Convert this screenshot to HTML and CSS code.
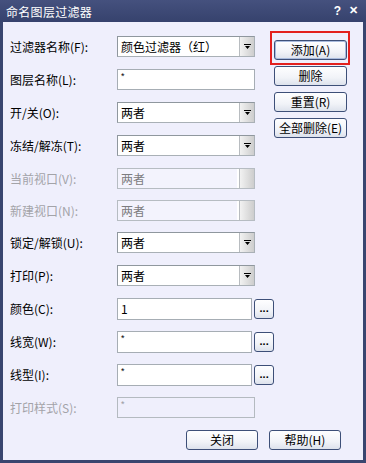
FILE: index.html
```html
<html>
  <head>
    <meta charset="utf-8">
    <link rel="stylesheet" href="styles.css">
  </head>
  <body>
    <div class="dialog">
      <div class="titlebar">
        <span class="title">命名图层过滤器</span>
        <span class="caption-btns"><span class="help">?</span><span class="close">✕</span></span>
      </div>

      <div class="content">
        <div class="form">
          <div class="row">
            <span class="label">过滤器名称(F):</span>
            <div class="combo"><span class="val">颜色过滤器（红）</span><span class="drop"><svg width="7" height="5" viewBox="0 0 7 5"><path d="M0 0h7v1H0zM1 2h5L3.5 5z" fill="#000"/></svg></span></div>
          </div>
          <div class="row">
            <span class="label">图层名称(L):</span>
            <div class="text wide"><span class="star">*</span></div>
          </div>
          <div class="row">
            <span class="label">开/关(O):</span>
            <div class="combo"><span class="val">两者</span><span class="drop"><svg width="7" height="5" viewBox="0 0 7 5"><path d="M0 0h7v1H0zM1 2h5L3.5 5z" fill="#000"/></svg></span></div>
          </div>
          <div class="row">
            <span class="label">冻结/解冻(T):</span>
            <div class="combo"><span class="val">两者</span><span class="drop"><svg width="7" height="5" viewBox="0 0 7 5"><path d="M0 0h7v1H0zM1 2h5L3.5 5z" fill="#000"/></svg></span></div>
          </div>
          <div class="row disabled">
            <span class="label">当前视口(V):</span>
            <div class="combo"><span class="val">两者</span><span class="drop"></span></div>
          </div>
          <div class="row disabled short">
            <span class="label">新建视口(N):</span>
            <div class="combo"><span class="val">两者</span><span class="drop"></span></div>
          </div>
          <div class="row">
            <span class="label">锁定/解锁(U):</span>
            <div class="combo"><span class="val">两者</span><span class="drop"><svg width="7" height="5" viewBox="0 0 7 5"><path d="M0 0h7v1H0zM1 2h5L3.5 5z" fill="#000"/></svg></span></div>
          </div>
          <div class="row">
            <span class="label">打印(P):</span>
            <div class="combo"><span class="val">两者</span><span class="drop"><svg width="7" height="5" viewBox="0 0 7 5"><path d="M0 0h7v1H0zM1 2h5L3.5 5z" fill="#000"/></svg></span></div>
          </div>
          <div class="row">
            <span class="label">颜色(C):</span>
            <div class="text"><span class="num">1</span></div>
            <div class="btn dots">...</div>
          </div>
          <div class="row">
            <span class="label">线宽(W):</span>
            <div class="text"><span class="star">*</span></div>
            <div class="btn dots">...</div>
          </div>
          <div class="row">
            <span class="label">线型(I):</span>
            <div class="text"><span class="star">*</span></div>
            <div class="btn dots">...</div>
          </div>
          <div class="row disabled">
            <span class="label">打印样式(S):</span>
            <div class="text wide"><span class="star">*</span></div>
          </div>
        </div>

        <div class="side">
          <div class="btn side-btn focus">添加(A)</div>
          <div class="btn side-btn">删除</div>
          <div class="btn side-btn">重置(R)</div>
          <div class="btn side-btn">全部删除(E)</div>
        </div>
      </div>

      <div class="footer">
        <div class="btn foot-btn">关闭</div>
        <div class="btn foot-btn">帮助(H)</div>
      </div>
    </div>
  </body>
</html>
```

FILE: styles.css
```css
body {
  margin: 0;
  font-family: "Noto Sans CJK SC", "Liberation Sans", sans-serif;
  font-size: 12px;
  color: #000;
}

.dialog {
  width: 366px;
  height: 463px;
  box-sizing: border-box;
  background: #efeffc;
  border: 3px solid #39456f;
  border-top: none;
  display: flex;
  flex-direction: column;
}

.titlebar {
  height: 22px;
  margin: 0 -3px;
  padding: 0 8px 0 6px;
  background: linear-gradient(#45517e, #36426d);
  color: #fff;
  display: flex;
  align-items: center;
  justify-content: space-between;
}

.title {
  font-size: 12px;
  letter-spacing: 0.3px;
}

.caption-btns {
  display: flex;
  gap: 8px;
  font-family: "Liberation Sans", sans-serif;
  font-weight: bold;
  font-size: 12px;
}

.close {
  font-size: 11px;
}

.content {
  display: flex;
  padding-top: 8px;
}

.form {
  width: 264px;
  padding-left: 7px;
}

.row {
  height: 33px;
  display: flex;
  align-items: center;
}

.row.short {
  height: 31px;
}

.label {
  width: 107px;
  flex: none;
  white-space: nowrap;
}

.row.disabled .label {
  color: #a3a3a8;
}

.combo {
  width: 138px;
  height: 21px;
  box-sizing: border-box;
  border: 1px solid #a9b0b6;
  border-top-color: #8f979e;
  border-left-color: #8f979e;
  background: #fff;
  display: flex;
}

.combo .val {
  flex: 1;
  padding-left: 3px;
  line-height: 19px;
  white-space: nowrap;
  overflow: hidden;
}

.combo .drop {
  width: 14px;
  border-left: 1px solid #b8bcc0;
  background: linear-gradient(90deg, #f2f2f2, #cdcdcd);
  display: flex;
  align-items: center;
  justify-content: center;
}

.row.disabled .combo {
  background: #f3f3fd;
  border-color: #b6bcc2;
}

.row.disabled .combo .val {
  color: #7c7c80;
  border-right: 2px solid #fff;
}

.text {
  width: 137px;
  height: 22px;
  box-sizing: border-box;
  border: 1px solid #a6adb4;
  background: #fff;
  padding-left: 3px;
}

.text.wide {
  width: 138px;
  height: 21px;
}

.row.disabled .text {
  background: #efeffc;
  border-color: #b4bac0;
  color: #9a9a9e;
}

.star {
  font-family: "Liberation Sans", sans-serif;
  font-size: 9px;
  line-height: 12px;
  vertical-align: top;
}

.num {
  line-height: 20px;
}

.btn {
  box-sizing: border-box;
  border: 1px solid #3d4f78;
  border-radius: 3px;
  background: linear-gradient(#fefeff, #f1f3f8 60%, #dde2ec);
  text-align: center;
  white-space: nowrap;
}

.dots {
  width: 20px;
  height: 20px;
  margin-left: 2px;
  font-family: "Liberation Sans", sans-serif;
  font-weight: bold;
  font-size: 11px;
  line-height: 16px;
}

.side {
  margin-top: 10px;
  display: flex;
  flex-direction: column;
  gap: 6px;
}

.side-btn {
  width: 73px;
  height: 20px;
  line-height: 18px;
}

.side-btn.focus {
  position: relative;
  box-shadow: inset 0 0 0 1px #a9bbdd;
}

.side-btn.focus::after {
  content: "";
  position: absolute;
  left: -5px;
  top: -10px;
  right: -4px;
  bottom: -6px;
  border: 2px solid #e3201e;
}

.footer {
  display: flex;
  gap: 11px;
  padding-left: 183px;
  margin-top: 6px;
}

.foot-btn {
  width: 72px;
  height: 20px;
  line-height: 18px;
}
```
